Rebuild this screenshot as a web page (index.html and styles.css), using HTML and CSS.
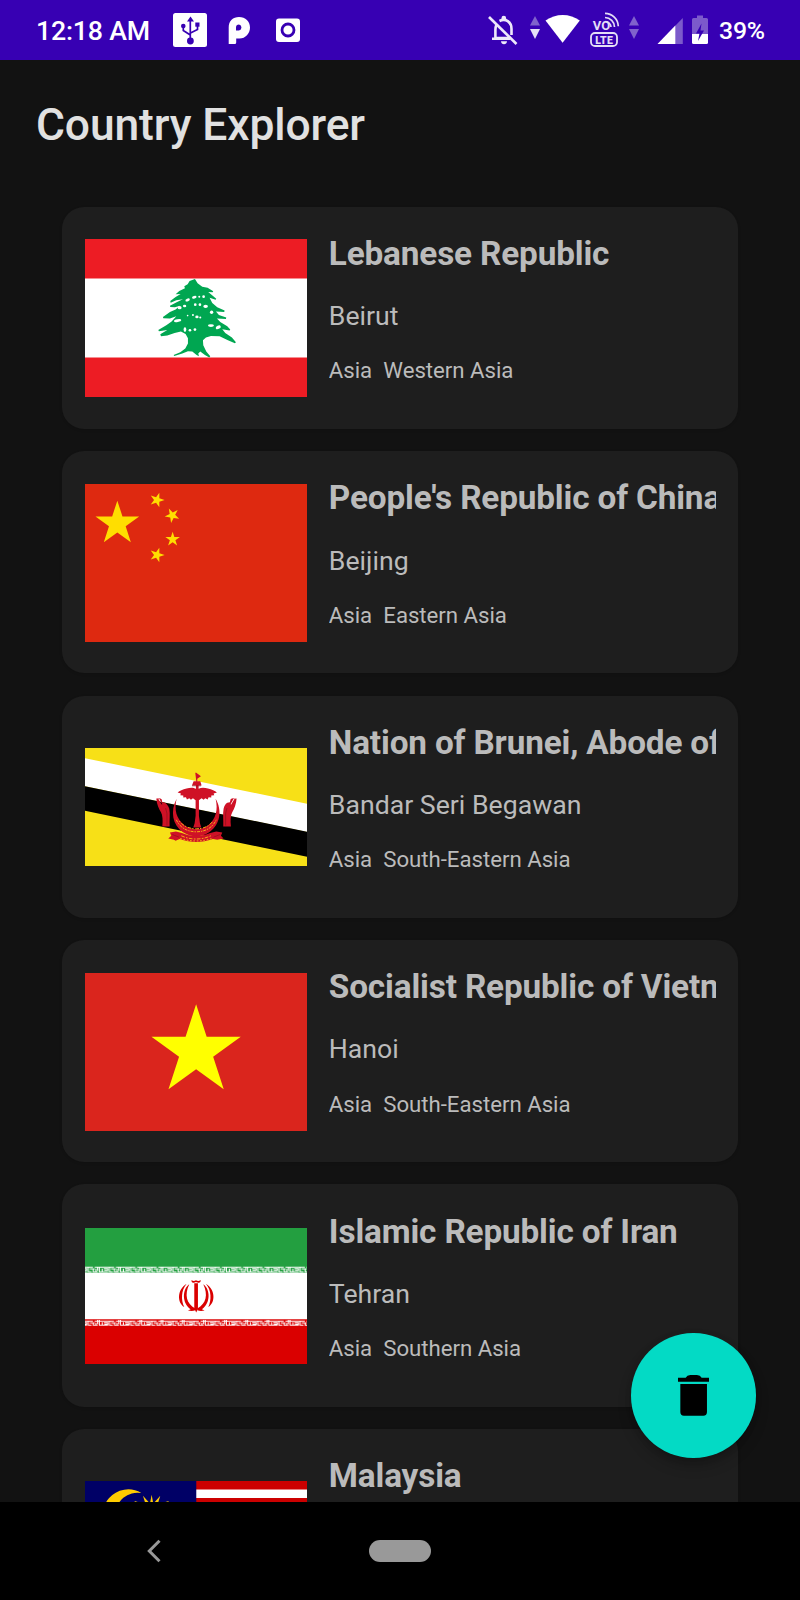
FILE: index.html
```html
<!DOCTYPE html>
<html lang="en">
<head>
<meta charset="utf-8">
<title>Country Explorer</title>
<link rel="stylesheet" href="styles.css">
</head>
<body>
<svg class="defs" aria-hidden="true">
  <defs>
    <polygon id="star" points="0,-1 .2245,-.309 .951,-.309 .363,.118 .588,.809 0,.382 -.588,.809 -.363,.118 -.951,-.309 -.2245,-.309"/>
  </defs>
</svg>
<div class="screen">
  <header class="status">
    <span class="clock">12:18 AM</span>
    <svg class="ic usb" viewBox="173 0 34 60"><rect x="173" y="13" width="34" height="34" rx="2.5" fill="#fff"/><g fill="none" stroke="#3700b3" stroke-width="1.700"><path d="M190.300 40V20M183.300 26v4.500l7 4.500M197.500 25v4.500l-7 3.500"/></g><g fill="#3700b3"><path d="M187 21.500l3.500-5 3.500 5z"/><circle cx="190.400" cy="41" r="3.400"/><circle cx="183.300" cy="26" r="2.300"/><rect x="195.300" y="22.500" width="4.200" height="4.200"/></g></svg>
    <svg class="ic pandora" viewBox="228 0 22 60"><path fill="#fff" fill-rule="evenodd" d="M228.700 44V27.500C228.700 21 233 17 239 17c6.500 0 11 4.500 11 10.500S245.500 38.500 239.500 38.500H236.200V42.500q0 1.500-1.500 1.500zM239 24.500a3 3 0 0 0-3 3V30.400H239a3 3 0 0 0 0-5.900z"/></svg>
    <svg class="ic cam" viewBox="276 0 24 60"><rect x="276" y="18.500" width="24" height="23.500" rx="3" fill="#fff"/><circle cx="288" cy="30" r="6" fill="#fff" stroke="#3700b3" stroke-width="2.800"/></svg>
    <span class="grow"></span>
    <svg class="ic bell" viewBox="488 0 30 60"><g fill="none" stroke="#eee9fa" stroke-width="2.600"><path d="M489 17l27.500 27"/><path d="M496.500 24.500c-.9 1.800-1.100 3.500-1.100 5.500v8h15M499.500 21c6-3 12 .8 12 8v6M492 38.700h18"/></g><path fill="#eee9fa" d="M501.500 20v-2a2.300 2.300 0 0 1 4.600 0V20zM501 41.200h6c0 4-6 4-6 0z"/></svg>
    <svg class="ic traffic on" viewBox="0 0 10 60"><path d="M0 25.500L5 16l5 9.500z"/><path class="down" d="M0 29h10l-5 10z"/></svg>
    <svg class="ic wifi" viewBox="545 0 35 60"><path fill="#fff" d="M545.500 20.500c10-7.500 24.500-7.500 34.300 0L562.600 42.700z"/></svg>
    <svg class="ic volte" viewBox="590 0 30 60"><rect x="591" y="33" width="26" height="13" rx="4" fill="none" stroke="#e4ddf6" stroke-width="1.800"/><text x="604.200" y="43.500" text-anchor="middle" class="lte">LTE</text><text x="592.800" y="30.300" class="vo">VO</text><g fill="none" stroke="#e4ddf6" stroke-width="1.700"><path d="M605.500 21.700a5.500 5.500 0 0 1 5.500 5.300M605 17.500a9.500 9.500 0 0 1 9.500 9.500M605 13.300a13.500 13.500 0 0 1 13.300 13"/></g></svg>
    <svg class="ic traffic off" viewBox="0 0 10 60"><path d="M0 25.500L5 16l5 9.500z"/><path d="M0 29h10l-5 10z"/></svg>
    <svg class="ic signal" viewBox="657 0 26 60"><path fill="#7c5acb" d="M682.800 18v26H675V26z"/><path fill="#fff" d="M675.300 25.500V44H657.500z"/></svg>
    <svg class="ic battery" viewBox="691 0 18 60"><path fill="#7c5acb" d="M692 35V19.500q0-1.500 1.500-1.500h3.500v-2.500h6V18h3.500q1.500 0 1.500 1.500V35z"/><path fill="#fff" d="M692 34h16v8.500q0 1.500-1.500 1.500h-13q-1.500 0-1.500-1.500z"/><path fill="#3700b3" d="M701.500 23.500L696 33.500h3.500l-1.500 7.500 6-10.500h-3.500z"/></svg>
    <span class="pct">39%</span>
  </header>
  <main class="content">
    <h1 class="heading">Country Explorer</h1>
    <section class="list">
      <article class="card">
        <svg class="flag" viewBox="73 117 667 474">
          <path fill="#ed1c24" d="M70 110h680v490H70z"/><path fill="#fff" d="M70 235.500h680v237H70z"/>
          <g transform="translate(-6 0)">
          <path fill="#00a651" d="M409 237l8 13 14 10 16 3 17 11-2 3-13-1 8 7 16 13-2 3-18-6 8 16 15 13 22 10-1 4-25-1 9 10 22 8-1 4-27-1 10 10 21 13 9 10-2 3-22-4 9 11 20 14 12 14-3 3-21-9-25-12-26-1-15 5-9 8 1 15 9 19 12 14-3 4-13-8-14-10-6 6 2 8-7-4-13-10-13-1-17 7-24 7-2-3 20-8 15-11 8-15 0-16-7-13-14-7-19 4-22 8-19 2-2-6 21-13-25 4-2-4 24-14 16-11 14-16-19 7-20-1-1-4 21-15 17-7 13-12-15 5-14-1-1-4 20-10 19-9-20 3-17 7-1-5 16-12 15-9-15 1 11-10 17-8-2-6 10-6 6-10z"/>
          <g fill="#fff"><ellipse cx="407" cy="292" rx="7" ry="4" transform="rotate(-18 407 292)"/><circle cx="422" cy="290" r="3"/><circle cx="435" cy="290" r="4"/><ellipse cx="387" cy="300" rx="7" ry="4" transform="rotate(-25 387 300)"/><circle cx="410" cy="314" r="4"/><circle cx="424" cy="314" r="4"/><ellipse cx="441" cy="319" rx="7" ry="5"/><ellipse cx="363" cy="323" rx="6" ry="5"/><ellipse cx="378" cy="318" rx="5" ry="4"/><circle cx="459" cy="337" r="5"/><circle cx="387" cy="347" r="2.500"/><circle cx="403" cy="345" r="3"/><ellipse cx="415" cy="351" rx="5" ry="4"/><circle cx="425" cy="353" r="3"/><ellipse cx="357" cy="362" rx="11" ry="4" transform="rotate(-10 357 362)"/><ellipse cx="457" cy="377" rx="9" ry="4"/><ellipse cx="479" cy="382" rx="8" ry="5" transform="rotate(-25 479 382)"/><ellipse cx="379" cy="389" rx="4" ry="7"/><circle cx="394" cy="391" r="4"/><circle cx="409" cy="389" r="4"/></g>
          </g>
        </svg>
        <div class="info"><h2 class="name">Lebanese Republic</h2><p class="city">Beirut</p><p class="region"><span>Asia</span><span>Western Asia</span></p></div>
      </article>
      <article class="card">
        <svg class="flag" viewBox="73 101 667 474">
          <path fill="#de2910" d="M70 95h680v490H70z"/>
          <g fill="#ffde00"><use href="#star" transform="translate(170 220) scale(69)"/><use href="#star" transform="translate(289 149) rotate(18) scale(23)"/><use href="#star" transform="translate(335 195) rotate(45) scale(23)"/><use href="#star" transform="translate(336 267) scale(23)"/><use href="#star" transform="translate(289 314) rotate(18) scale(23)"/></g>
        </svg>
        <div class="info"><h2 class="name">People's Republic of China</h2><p class="city">Beijing</p><p class="region"><span>Asia</span><span>Eastern Asia</span></p></div>
      </article>
      <article class="card">
        <svg class="flag" viewBox="73 81.500 667 355.500">
          <path fill="#f7e017" d="M70 75h680v370H70z"/><path fill="#fff" d="M68 111l682 140v85L68 195z"/><path d="M68 195l682 140v75L68 269z"/>
          <g fill="#cf1126">
            <path d="M404 156h3l14 10-11 8v7h9l4 13h-9v10c8-5 18-4 28-1 12 3 21 7 27 12l-10 3 2 5-9 1 0 6-8-1-3 7-7-4-5 5-6-5-8 6v47l3 22 4 13h-24l4-13 3-22v-47l-8-6-6 5-5-5-7 4-3-7-8 1v-6l-9-1 2-5-10-3c6-5 15-9 27-12 10-3 20-4 28 1v-10h-12l5-13h8z"/>
            <path d="M348 234c-20 38-12 78 18 100 26 17 57 17 82-1 30-22 38-63 17-99 8 33 1 61-22 79-21 16-51 16-72 0-24-19-31-46-23-79z"/>
            <path d="M288 234c6-3 11-2 15 1l2 9 8 2c6 4 10 9 13 18 3 14 0 35 1 53h-22c2-19 1-34-4-43-6-10-13-24-14-41l6 1 10 17 2-1-9-16zM525 234c-6-3-11-2-15 1l-2 9-8 2c-6 4-9 9-11 18-3 14 0 35-1 53h23c-2-19-1-34 4-43 6-10 12-24 13-41l-6 1-10 17-2-1 9-16z"/>
            <path d="M328 335l18-3 18 5c27 12 57 12 85 0l18-5 18 3-4 10 8 8-19 4-13-2c-34 12-66 12-100 0l-12 5-5-3-17-4 9-8z"/>
          </g>
          <g fill="none" stroke="#f7a617" stroke-width="3"><path d="M347 297c10 21 29 36 60 36s50-15 60-36" stroke-dasharray="9 3 4 3"/><path d="M356 301c11 14 28 23 51 23s39-8 50-23" stroke-dasharray="4 5 11 3"/><path d="M362 345c28 13 61 13 89 0" stroke-dasharray="11 4 5 4"/><path d="M359 353c30 10 65 10 95 0" stroke-dasharray="5 5"/></g>
          <g fill="none" stroke="#8b1019" stroke-width="2"><path d="M315 262l4 16v36M499 262l-4 16v36M394 195h27M335 341l20 8M479 341l-20 8"/></g>
        </svg>
        <div class="info"><h2 class="name">Nation of Brunei, Abode of Peace</h2><p class="city">Bandar Seri Begawan</p><p class="region"><span>Asia</span><span>South-Eastern Asia</span></p></div>
      </article>
      <article class="card">
        <svg class="flag" viewBox="73 38 667 474">
          <path fill="#da251d" d="M70 30h680v490H70z"/><use href="#star" fill="#ff0" transform="translate(406.500 273) scale(141)"/>
        </svg>
        <div class="info"><h2 class="name">Socialist Republic of Vietnam</h2><p class="city">Hanoi</p><p class="region"><span>Asia</span><span>South-Eastern Asia</span></p></div>
      </article>
      <article class="card">
        <svg class="flag" viewBox="73 54 667 408">
          <defs>
            <pattern id="kufic" x="57" y="0" width="63.600" height="21" patternUnits="userSpaceOnUse"><path fill="none" stroke="#fff" stroke-width="3.200" d="M0 3.500h40M45 3.500h18.600M4 8v10M0 18h22M9 8h12v5H10M26 3v15h10M31 9h14M41 9v9h13M49 8v10M54 3v11M59 3v15h4.600"/></pattern>
            <pattern id="kuficRed" x="57" y="327" width="63.600" height="21" patternUnits="userSpaceOnUse"><path fill="none" stroke="#fff" stroke-width="3.200" d="M0 6.500h40M45 6.500h18.600M4 10v10M0 19h22M9 11h12v5H10M26 6v13h10M31 12h14M41 12v7h13M49 11v9M54 3v13M59 3v16h4.600"/></pattern>
          </defs>
          <path fill="#fff" d="M70 50h680v420H70z"/><path fill="#239f40" d="M70 50h680v138H70z"/><path fill="#da0000" d="M70 328h680v140H70z"/>
          <path fill="url(#kufic)" transform="translate(0 168)" d="M70 0h680v21H70z"/><path fill="url(#kuficRed)" d="M70 327h680v21H70z"/>
          <g fill="#da0000"><path d="M401 220h11v76l-5 12-6-12z"/><path d="M393 210c4 4 9 3 13 1 5 2 9 3 14-1 1 5-2 9-7 8l-7-2-6 2c-6 1-8-3-7-8z"/><path d="M378 221c-29 17-29 57-7 70-10-20-10-50 7-70zM436 221c29 17 29 57 7 70 10-20 10-50-7-70z"/><path d="M386 223c-15 31-9 58 18 73v5c-6 3-14 3-22 1l8-4c-27-19-25-60-4-75zM428 223c15 31 9 58-18 73v5c6 3 14 3 22 1l-8-4c27-19 25-60 4-75z"/></g>
        </svg>
        <div class="info"><h2 class="name">Islamic Republic of Iran</h2><p class="city">Tehran</p><p class="region"><span>Asia</span><span>Southern Asia</span></p></div>
      </article>
      <article class="card">
        <svg class="flag" viewBox="73 182 667 355.500">
          <path fill="#fff" d="M70 182h680v356H70z"/>
          <path stroke="#c00" stroke-width="25.400" d="M70 194.700h680M70 245.500h680M70 296.300h680M70 347.100h680M70 397.900h680M70 448.700h680M70 499.500h680"/>
          <path fill="#006" d="M70 178h337v207H70z"/>
          <path fill="#fc0" d="M242 218a76 76 0 1 0 0 130a66 66 0 1 1 0-130z"/>
          <path fill="#fc0" d="M273 223l5 27 21-24-8 26 34-10-22 28 28 13-28 13 22 28-34-10 8 26-21-24-5 27-5-27-21 24 8-26-34 10 22-28-28-13 28-13-22-28 34 10-8-26 21 24z"/>
        </svg>
        <div class="info"><h2 class="name">Malaysia</h2><p class="city">Kuala Lumpur</p><p class="region"><span>Asia</span><span>South-Eastern Asia</span></p></div>
      </article>
    </section>
    <button class="fab" aria-label="Delete"><svg viewBox="0 0 94 122"><path d="M0 8h23q4-8 14-8h20q10 0 14 8h23v12H0zM7 27h80v84q0 11-11 11H18q-11 0-11-11z"/></svg></button>
  </main>
  <nav class="nav">
    <svg class="back" viewBox="0 0 14 24"><path d="M12.500 1.700L2.300 12l10.200 10.300" fill="none" stroke="#999" stroke-width="3"/></svg>
    <span class="pill"></span>
  </nav>
</div>
</body>
</html>
```
FILE: styles.css
```css
* { box-sizing: border-box; }
body { margin: 0; background: #121212; font-family: Roboto, "Liberation Sans", sans-serif; }
h1, h2, p { margin: 0; }
.defs { position: absolute; width: 0; height: 0; }
.screen { width: 800px; height: 1600px; display: flex; flex-direction: column; overflow: hidden; }

.status { height: 60px; flex: none; background: #3700b3; color: #fff; display: flex; align-items: center; padding: 0 36px; }
.clock, .pct { font-weight: 500; line-height: 60px; white-space: nowrap; padding-top: 2px; }
.clock { font-size: 26.700px; letter-spacing: -.2px; width: 137px; }
.pct { font-size: 24.800px; letter-spacing: -.2px; width: 45px; margin-left: 10px; }
.ic { height: 60px; flex: none; display: block; }
.grow { flex: 1; }
.usb { width: 34px; }
.pandora { width: 22px; margin-left: 21px; }
.cam { width: 24px; margin-left: 26px; }
.bell { width: 30px; }
.traffic { width: 10px; fill: #8062cc; }
.on { margin-left: 12px; }
.on .down { fill: #e6e0f7; }
.wifi { width: 35px; margin-left: 5px; }
.volte { width: 30px; margin-left: 10px; }
.off { margin-left: 9px; }
.signal { width: 26px; margin-left: 18px; }
.battery { width: 18px; margin-left: 8px; }
.lte { font: 900 10.500px Roboto, sans-serif; fill: #e4ddf6; letter-spacing: .3px; }
.vo { font: 700 13px Roboto, sans-serif; fill: #e4ddf6; }

.content { flex: 1; min-height: 0; overflow: hidden; position: relative; background: #121212; }
.heading { height: 146.700px; padding: 39px 0 0 36px; font-size: 44.400px; line-height: 52px; font-weight: 500; letter-spacing: -.12px; color: #e1e1e1; }
.list { display: flex; flex-direction: column; gap: 22.220px; padding: 0 62.220px; }
.card { height: 222.220px; flex: none; display: flex; align-items: center; gap: 21.900px; padding: 0 22.220px 0 22.500px; border-radius: 22px; background: #1e1e1e; box-shadow: 0 1px 3px rgba(0, 0, 0, .15); }
.flag { width: 222.220px; height: auto; flex: none; display: block; margin-top: 1px; }
.info { flex: 1; min-width: 0; height: 100%; padding-top: 27.200px; overflow: hidden; color: #bbb; white-space: nowrap; }
.name { font-size: 33.330px; line-height: 39px; font-weight: 700; letter-spacing: -.16px; }
.city { font-size: 26.670px; line-height: 31px; margin-top: 28.300px; }
.region { display: flex; gap: 11.110px; font-size: 22.220px; line-height: 26px; margin-top: 25.200px; letter-spacing: -.03px; }

.fab { position: absolute; right: 44.400px; bottom: 44.400px; width: 124.440px; height: 124.440px; padding: 0; border: 0; border-radius: 50%; background: #03dac5; display: flex; align-items: center; justify-content: center; box-shadow: 0 8px 14px rgba(0, 0, 0, .2), 0 2px 6px rgba(0, 0, 0, .15); }
.fab svg { width: 31.300px; height: 40.700px; display: block; }

.nav { height: 98px; flex: none; background: #000; display: flex; align-items: center; }
.back { width: 14px; height: 24px; margin-left: 147px; }
.pill { width: 62px; height: 22px; margin-left: 208px; border-radius: 11px; background: #999; }
```
